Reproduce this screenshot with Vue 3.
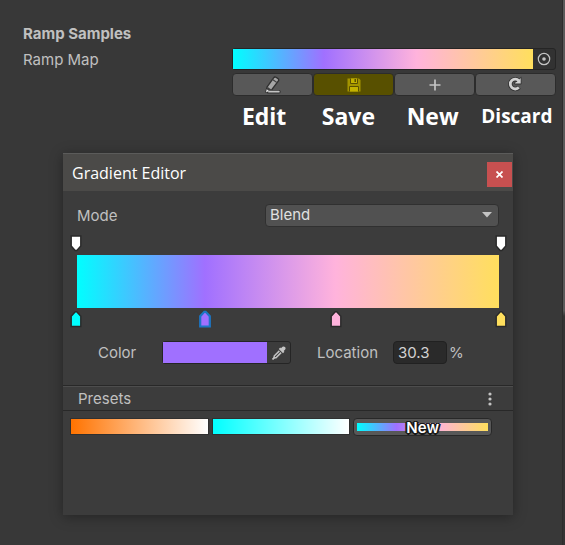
<script setup>
import { computed, ref } from 'vue'

const mode = ref('Blend')
const location = ref('30.3')

const alphaKeys = [0, 100]
const colorKeys = [
  { at: 0, color: '#00ffff' },
  { at: 30.3, color: '#a070ff', selected: true },
  { at: 61.2, color: '#ffb3dc' },
  { at: 100, color: '#ffdf5d' },
]
const ramp = computed(
  () => `linear-gradient(90deg, ${colorKeys.map((k) => `${k.color} ${k.at}%`).join(', ')})`,
)
const presets = [
  { name: 'Orange to white', fill: 'linear-gradient(90deg, #ff7300, #ffffff)' },
  { name: 'Cyan to white', fill: 'linear-gradient(90deg, #00ffff, #ffffff)' },
]
</script>

<template>
  <main class="inspector">
    <section class="samples">
      <h2>Ramp Samples</h2>
      <div class="property">
        <span class="label">Ramp Map</span>
        <div class="controls">
          <div class="ramp-field">
            <button class="ramp" :style="{ background: ramp }" aria-label="Ramp Map"></button>
            <button class="pick" aria-label="Select ramp">
              <svg width="14" height="14" viewBox="0 0 14 14">
                <circle cx="7" cy="7" r="5.7" fill="none" stroke="#c4c4c4" stroke-width="1.2" />
                <circle cx="7" cy="7" r="1.8" fill="#c4c4c4" />
              </svg>
            </button>
          </div>
          <div class="actions">
            <button aria-label="Edit">
              <svg width="18" height="18" viewBox="0 0 18 18">
                <path d="M4 15.7H15" stroke="#303030" stroke-width="3.4" stroke-linecap="round" />
                <path d="M2 15.7L3 11L9.6 1.8Q10.6.5 12 1.3L14 2.6Q15.2 3.6 14.4 5L7.6 14Z" fill="#a6a6a6" stroke="#303030" stroke-width="1.3" />
                <path d="M8.6 3.6L12.8 6.6" stroke="#444" stroke-width="1.2" />
                <path d="M3.4 10.8L7.6 13.8L5 15L2.4 15.3Z" fill="#404040" />
                <path d="M2 16.2L2.7 13.2L5 15Z" fill="#eee" />
                <path d="M5 15.7H14.8" stroke="#c4c4c4" stroke-width="1.8" stroke-linecap="round" />
              </svg>
            </button>
            <button class="dirty" aria-label="Save">
              <svg width="14" height="14" viewBox="0 0 14 14">
                <path d="M.5.5H12L13.5 2V13.5H.5Z" fill="#a39400" />
                <path d="M3.5.5V5.5H10.5V.5M2.5 13.5V8.5H11.5V13.5" fill="#c3b200" stroke="#5b5000" />
                <path d="M7.5 1H9V4H7.5Z" fill="#5b5000" />
              </svg>
            </button>
            <button aria-label="New">
              <svg width="12" height="12" viewBox="0 0 12 12">
                <path d="M6 .5V11.5M.5 6H11.5" stroke="#c4c4c4" stroke-width="1.7" />
              </svg>
            </button>
            <button class="discard" aria-label="Discard">
              <svg width="16" height="16" viewBox="0 0 16 16">
                <path d="M12 11.2A4.9 4.9 0 1 1 11.6 4.6" fill="none" stroke="#333" stroke-width="4.6" />
                <path d="M14.2 1.2V8H7.6V6.4L9.8 5.4Z" fill="#d2d2d2" stroke="#333" stroke-width="1" />
                <path d="M11.8 11.4A4.9 4.9 0 1 1 11.8 4.8" fill="none" stroke="#d2d2d2" stroke-width="2.8" />
              </svg>
            </button>
          </div>
          <div class="captions">
            <span>Edit</span>
            <span>Save</span>
            <span>New</span>
            <span class="small">Discard</span>
          </div>
        </div>
      </div>
    </section>

    <section class="window" aria-labelledby="editor-title">
      <header>
        <h1 id="editor-title">Gradient Editor</h1>
        <button class="close" aria-label="Close">
          <svg width="7" height="7" viewBox="0 0 7 7">
            <path d="M.5.5L6.5 6.5M6.5.5L.5 6.5" stroke="#fff" stroke-width="1.7" />
          </svg>
        </button>
      </header>

      <div class="body">
        <div class="mode">
          <label for="mode">Mode</label>
          <div class="select">
            <select id="mode" v-model="mode">
              <option>Blend</option>
              <option>Fixed</option>
            </select>
            <svg class="arrow" width="10" height="6" viewBox="0 0 10 6">
              <path d="M0 0H10L5 5.5Z" fill="#c4c4c4" />
            </svg>
          </div>
        </div>

        <div class="keys">
          <button v-for="at in alphaKeys" :key="at" class="key" :style="{ left: at + '%' }" :aria-label="`Alpha key ${at}%`">
            <svg width="14" height="18" viewBox="0 0 14 18">
              <path d="M2.2 2H11.8V12L7.8 16.5H6.2L2.2 12Z" fill="#fff" stroke="#292929" stroke-width="1.4" />
            </svg>
          </button>
        </div>
        <div class="gradient" :style="{ background: ramp }"></div>
        <div class="keys">
          <button v-for="k in colorKeys" :key="k.at" class="key" :style="{ left: k.at + '%' }" :aria-label="`Color key ${k.at}%`">
            <svg width="14" height="18" viewBox="0 0 14 18">
              <path
                d="M2.2 16.5V6.2L6.3 1.8H7.7L11.8 6.2V16.5Z"
                :fill="k.color"
                :stroke="k.selected ? '#1c76c5' : '#292929'"
                :stroke-width="k.selected ? 2.2 : 1.4"
              />
            </svg>
          </button>
        </div>

        <div class="values">
          <span class="label">Color</span>
          <div class="color-field">
            <button class="swatch" aria-label="Color"></button>
            <button class="dropper" aria-label="Pick color">
              <svg width="14" height="14" viewBox="0 0 14 14">
                <path d="M9 2.2L10.5.8Q11.8-.1 13 1Q14.1 2.2 13.2 3.5L11.7 5L12.4 5.8L11 7.2L6.8 3L8.2 1.6Z" fill="#c4c4c4" />
                <path d="M7.4 4.9L2.2 10V11.8H4L9.1 6.6" fill="none" stroke="#c4c4c4" stroke-width="1.5" />
                <path d="M2.8 11.2L.5 13.5" stroke="#c4c4c4" stroke-width="1.7" />
              </svg>
            </button>
          </div>
          <label for="location">Location</label>
          <input id="location" v-model="location" type="text" inputmode="decimal" />
          <span class="unit">%</span>
        </div>
      </div>

      <div class="presets-bar">
        <h3>Presets</h3>
        <button class="menu" aria-label="Presets menu">
          <svg width="4" height="14" viewBox="0 0 4 14">
            <circle cx="2" cy="2" r="1.6" fill="#c4c4c4" />
            <circle cx="2" cy="7" r="1.6" fill="#c4c4c4" />
            <circle cx="2" cy="12" r="1.6" fill="#c4c4c4" />
          </svg>
        </button>
      </div>
      <div class="presets">
        <button v-for="p in presets" :key="p.name" class="preset" :style="{ background: p.fill }" :aria-label="p.name"></button>
        <button class="new-preset">
          <span class="new-fill" :style="{ background: ramp }">New</span>
        </button>
      </div>
    </section>
    <div class="scrollbar"></div>
  </main>
</template>

<style>
body {
  background: #383838;
}
</style>

<style scoped>
* {
  box-sizing: border-box;
}
.inspector {
  position: relative;
  min-height: 100vh;
  overflow: hidden;
  background: #383838;
  color: #c0c0c0;
  font: 15px/20px Inter, sans-serif;
}
h1,
h2,
h3 {
  margin: 0;
  font: inherit;
}
button,
input,
select {
  margin: 0;
  padding: 0;
  border: 0;
  background: none;
  color: inherit;
  font: inherit;
}
svg {
  display: block;
  flex: none;
}
.samples {
  padding: 24px 9px 0 23px;
}
.samples h2 {
  font-weight: 700;
}
.property {
  display: grid;
  grid-template-columns: 209px 1fr;
  padding-top: 4px;
}
.property > .label {
  padding-top: 2px;
}
.ramp-field {
  display: flex;
  height: 22px;
  border: 1px solid #252525;
  border-radius: 3px;
  background: #323232;
}
.ramp {
  flex: 1;
}
.pick {
  display: grid;
  place-items: center;
  width: 22px;
}
.actions {
  display: grid;
  grid-template-columns: repeat(4, 1fr);
  margin-top: 3px;
}
.actions button {
  display: grid;
  place-items: center;
  height: 23px;
  border: 1px solid #2c2c2c;
  border-radius: 4px;
  background: #585858;
}
.actions .dirty {
  background: #585000;
}
.actions .discard {
  padding: 0 2px 2px 0;
}
.captions {
  display: grid;
  grid-template-columns: repeat(4, 1fr);
  margin: 4px -3px 0 -10px;
  color: #fff;
  font: 700 23px/32px "Open Sans", sans-serif;
  text-align: center;
}
.captions .small {
  font-size: 19px;
}
.window {
  margin: 21px 52px 30px 63px;
  min-height: 362px;
  background: #3c3c3c;
  box-shadow: 0 2px 12px rgba(0, 0, 0, 0.35);
}
header {
  display: flex;
  align-items: center;
  justify-content: space-between;
  height: 38px;
  padding: 3px 1px 0 9px;
  border-top: 1px solid #5b5b5a;
  background: #4b4a48;
}
h1 {
  padding-bottom: 2px;
  color: #fff;
  font: 16px/22px "Open Sans", sans-serif;
}
.close {
  display: grid;
  place-items: center;
  width: 25px;
  height: 25px;
  background: #c75050;
}
.body {
  padding: 13px 14px 21px;
}
.mode {
  display: grid;
  grid-template-columns: 188px 1fr;
  align-items: center;
}
.select {
  position: relative;
}
select {
  display: block;
  width: 100%;
  height: 23px;
  padding: 0 24px 2px 4px;
  border: 1px solid #303030;
  border-radius: 4px;
  background: #515151;
  color: #e0e0e0;
  appearance: none;
}
.arrow {
  position: absolute;
  top: 8px;
  right: 7px;
  pointer-events: none;
}
.keys {
  position: relative;
  height: 20px;
  margin: 0 -2px 0 -1px;
}
.mode + .keys {
  margin-top: 7px;
  margin-bottom: 1px;
}
.key {
  position: absolute;
  top: 0;
  transform: translateX(-50%);
}
.gradient {
  height: 53px;
  margin-bottom: 2px;
}
.values {
  display: flex;
  align-items: center;
  height: 23px;
  margin-top: 11px;
  padding-left: 21px;
}
.values > .label {
  width: 64px;
}
.color-field {
  display: flex;
  width: 129px;
  height: 23px;
  margin-right: 26px;
  border: 1px solid #252525;
  border-radius: 3px;
}
.swatch {
  flex: 1;
  background: #a070ff;
}
.dropper {
  display: grid;
  place-items: center;
  width: 23px;
}
.values label {
  width: 76px;
}
input {
  width: 54px;
  height: 23px;
  padding: 0 4px;
  border: 1px solid #212121;
  border-radius: 4px;
  background: #2a2a2a;
  color: #d2d2d2;
}
.unit {
  padding-left: 2px;
}
.presets-bar {
  display: flex;
  align-items: center;
  justify-content: space-between;
  height: 26px;
  padding: 2px 21px 0 15px;
  border-top: 1px solid #282828;
  border-bottom: 1px solid #282828;
  box-shadow: inset 0 1px #4d4d4d;
}
.presets {
  display: grid;
  grid-template-columns: repeat(3, 1fr);
  gap: 3px;
  padding: 7px 21px 0 7px;
}
.preset {
  height: 17px;
  border: 1px solid #303030;
  background-clip: padding-box !important;
  background-origin: padding-box !important;
}
.new-preset {
  display: grid;
  align-items: center;
  height: 18px;
  padding: 0 3px;
  border: 1px solid #282828;
  border-radius: 4px;
  background: #585858;
}
.new-fill {
  height: 8px;
  color: #fff;
  font-weight: 600;
  line-height: 10px;
  text-align: center;
  text-shadow: -1px -1px #181818, 1px -1px #181818, -1px 1px #181818, 1px 1px #181818, 0 2px #181818, 2px 0 #181818, -2px 0 #181818;
}
.scrollbar {
  position: absolute;
  top: 0;
  right: 0;
  width: 3px;
  height: 100%;
  border-left: 1px solid #2d2d2d;
  background: linear-gradient(#5a5a5a 57%, #343434 58%);
}
</style>
